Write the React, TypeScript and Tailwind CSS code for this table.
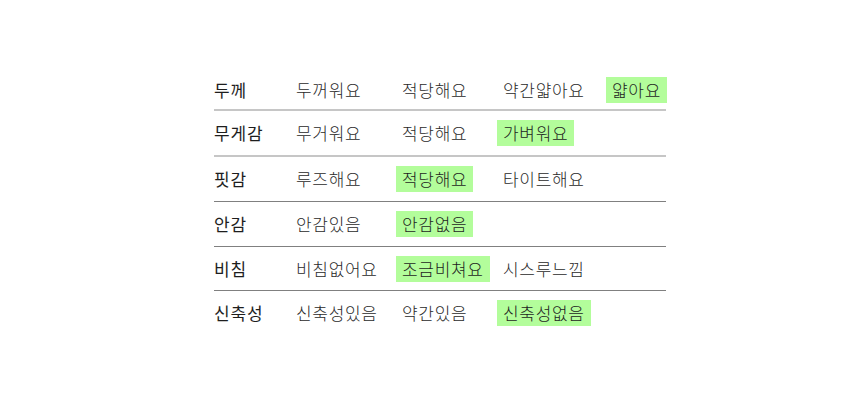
type Row = {
  label: string
  options: string[]
  selected: number
  rowClass: string
}

const ROWS: Row[] = [
  { label: "두께", options: ["두꺼워요", "적당해요", "약간얇아요", "얇아요"], selected: 3, rowClass: "h-[40px] border-b-2 border-[#c6c6c6]" },
  { label: "무게감", options: ["무거워요", "적당해요", "가벼워요"], selected: 2, rowClass: "h-[46px] border-b-2 border-[#c6c6c6]" },
  { label: "핏감", options: ["루즈해요", "적당해요", "타이트해요"], selected: 1, rowClass: "h-[45px] border-b border-[#808080]" },
  { label: "안감", options: ["안감있음", "안감없음"], selected: 1, rowClass: "h-[45px] border-b border-[#808080]" },
  { label: "비침", options: ["비침없어요", "조금비쳐요", "시스루느낌"], selected: 1, rowClass: "h-[44px] border-b border-[#808080]" },
  { label: "신축성", options: ["신축성있음", "약간있음", "신축성없음"], selected: 2, rowClass: "h-[44px]" },
]

export default function App() {
  return (
    <div
      className="w-[860px] h-[400px] bg-white pl-[214px] pt-[71px]"
      style={{ fontFamily: '"Noto Sans CJK KR", "Noto Sans", sans-serif' }}
    >
      <div className="w-[452px] flex flex-col">
        {ROWS.map((row) => (
          <div
            key={row.label}
            className={`grid grid-cols-[76px_106px_101px_109px_60px] items-center ${row.rowClass}`}
          >
            <span className="text-[17px] leading-[26px] tracking-[0.8px] font-normal text-[#1e1e1e]">{row.label}</span>
            {row.options.map((opt, i) => (
              <span key={opt} className="flex">
                <span
                  className={
                    i === row.selected
                      ? "px-[6px] text-[17px] leading-[26px] tracking-[0.7px] font-light text-[#1e1e1e] bg-[#b3fd9b] whitespace-nowrap"
                      : "px-[6px] text-[17px] leading-[26px] tracking-[0.7px] font-light text-[#2a2a2a] whitespace-nowrap"
                  }
                >
                  {opt}
                </span>
              </span>
            ))}
          </div>
        ))}
      </div>
    </div>
  )
}
